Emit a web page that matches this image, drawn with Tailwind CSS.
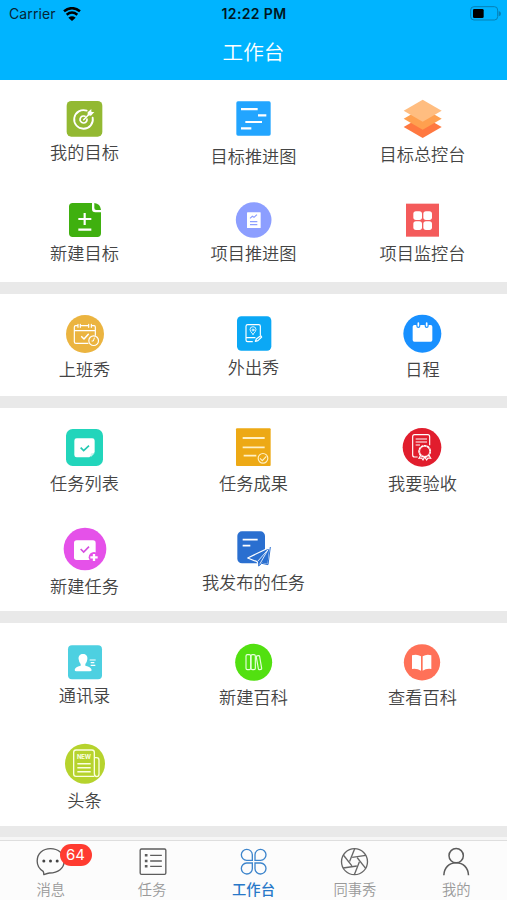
<!DOCTYPE html>
<html lang="zh-CN">
<head>
<meta charset="utf-8">
<title>工作台</title>
<script src="https://cdn.jsdelivr.net/npm/@tailwindcss/browser@4"></script>
</head>
<body class="w-[507px] h-[900px] overflow-hidden bg-[#e9e9e9] font-['Noto_Sans_CJK_SC',sans-serif] text-[#444]">
<div class="flex h-[900px] flex-col">
  <header class="h-[79.5px] shrink-0 bg-[#00b4ff]">
    <div class="grid h-[27px] grid-cols-[1fr_100px_1fr] items-center pl-[9px] pr-[6px] font-['Inter',sans-serif] text-[14px] text-[#062536]">
      <div class="flex items-center gap-[7px]"><span class="tracking-[0.12px]">Carrier</span>
        <svg class="h-[14px] w-[18px]" viewBox="186 18 54 42" fill="none" stroke="#000" stroke-width="7.5"><path d="M189 31Q213 12 237 31M197 41Q213 28 229 41"/><path d="M202 50Q213 42 224 50L213 60Z" fill="#000" stroke="none"/></svg>
      </div>
      <div class="-ml-[2px] text-center text-[14px] font-semibold tracking-[0.35px] text-[#001722]">12:22 PM</div>
      <svg class="h-[15px] w-[31px] justify-self-end" viewBox="1410 17 93 45"><rect x="1412" y="19" width="81" height="40" rx="10" fill="none" stroke="#0681b5" stroke-width="3"/><rect x="1419" y="26" width="32" height="27" rx="4"/><path d="M1496 32q7 2 7 8t-7 8z" fill="#0681b5"/></svg>
    </div>
    <h1 class="mt-[9px] text-center text-[20.6px] leading-[30px] font-[350] text-white">工作台</h1>
  </header>

  <main class="flex shrink-0 flex-col gap-3 text-[17.2px] leading-[18.5px] font-[350]">
    <section class="grid grid-cols-3 auto-rows-[101.25px] bg-white">
      <div class="flex flex-col items-center pt-4">
        <svg class="size-[45px] shrink-0" viewBox="66 18 135 135" fill="none" stroke="#fff" stroke-linecap="round"><rect x="80" y="33" width="107" height="107" rx="14" fill="#93b932" stroke="none"/><path d="M140 62A28 28 0 1 0 158 83" stroke-width="5.5"/><path d="M135 79A10.500 10.500 0 1 0 141 87" stroke-width="5"/><path d="M131 89L153 67" stroke-width="4.500"/><path d="M143 76V67L154 57V66H163L153 77Z" fill="#fff" stroke="none"/></svg>
        <span class="mt-[2px]">我的目标</span>
      </div>
      <div class="flex flex-col items-center pt-4">
        <svg class="size-[45px] shrink-0" viewBox="573 18 135 135"><rect x="589" y="34" width="103" height="103" rx="5" fill="#22a5ff"/><path d="M603 57.500H653M654 76H679M616 96H666M603 115H634" stroke="#fff" stroke-width="6.500"/></svg>
        <span class="mt-[6px]">目标推进图</span>
      </div>
      <div class="flex flex-col items-center pt-4">
        <svg class="size-[45px] shrink-0" viewBox="600 18 135 135"><path d="M611 111L668 78L725 111L668 144Z" fill="#ff7840"/><path d="M611 86L668 53L725 86L668 119Z" fill="#ffa04f"/><path d="M611 62L668 29L725 62L668 95Z" fill="#ffbd80"/></svg>
        <span class="mt-[4px]">目标总控台</span>
      </div>
      <div class="flex flex-col items-center pt-4">
        <svg class="size-[45px] shrink-0" viewBox="66 21 135 135"><path d="M98 39H156V57Q156 67 166 67H183V130Q183 141 172 141H98Q87 141 87 130V50Q87 39 98 39Z" fill="#3fb00f"/><path d="M163 39Q181 41 183 60H169Q163 60 163 54Z" fill="#3fb00f"/><path d="M134 69V105M115 87H154M115 119H154" stroke="#fff" stroke-width="6.500"/></svg>
        <span class="mt-[2px]">新建目标</span>
      </div>
      <div class="flex flex-col items-center pt-4">
        <svg class="size-[45px] shrink-0" viewBox="573 21 135 135" fill="none"><circle cx="641" cy="90" r="53.500" fill="#8c9eff"/><rect x="621" y="67" width="41" height="47" rx="1" fill="#fff"/><path d="M630 85L637 79L642 82L651 74M630 95H652M630 104H652" stroke="#8c9eff" stroke-width="3.500"/></svg>
        <span class="mt-[2.5px]">项目推进图</span>
      </div>
      <div class="flex flex-col items-center pt-4">
        <svg class="size-[45px] shrink-0" viewBox="600 21 135 135"><rect x="618" y="41" width="99" height="99" fill="#f45b5b"/><g fill="#fff"><rect x="640" y="64" width="26" height="26" rx="8"/><rect x="670" y="64" width="26" height="26" rx="8"/><rect x="640" y="94" width="26" height="26" rx="8"/><rect x="670" y="94" width="26" height="26" rx="8"/></g></svg>
        <span class="mt-[2px]">项目监控台</span>
      </div>
    </section>

    <section class="grid grid-cols-3 auto-rows-[102px] bg-white">
      <div class="flex flex-col items-center pt-4">
        <svg class="size-[45px] shrink-0" viewBox="66 15 135 135" fill="none" stroke="#fff" stroke-width="3.500" stroke-linecap="round" stroke-linejoin="round"><circle cx="135" cy="87" r="57" fill="#ebb440" stroke="none"/><path d="M114 62H107Q103 62 103 66V110Q103 115 108 115H144M166 91V66Q166 62 162 62H157M121 62H146M103 77H166M114 58V67M121 58V67M146 58V67M154 58V67"/><path d="M125 95L132 102L145 88" stroke-width="4.500"/><circle cx="161" cy="107" r="14.500"/><path d="M163 99L160 108H156" stroke-width="3"/></svg>
        <span class="mt-[4.5px]">上班秀</span>
      </div>
      <div class="flex flex-col items-center pt-4">
        <svg class="size-[45px] shrink-0" viewBox="573 15 135 135" fill="none" stroke="#fff" stroke-width="3.500" stroke-linecap="round" stroke-linejoin="round"><rect x="591" y="34" width="103" height="103" rx="13" fill="#0ba8f5" stroke="none"/><path d="M661 89V64Q661 59 656 59H623Q618 59 618 64V105Q618 110 623 110H637M618 98H645"/><path d="M639 88Q630 79 630 74A9 9 0 0 1 648 74Q648 79 639 88Z" stroke-width="2.500"/><circle cx="639" cy="75" r="3" stroke-width="2.500"/><path d="M646 109L649 102L662 92L665 96L654 107Z"/></svg>
        <span class="mt-[3px]">外出秀</span>
      </div>
      <div class="flex flex-col items-center pt-4">
        <svg class="size-[45px] shrink-0" viewBox="120 15 135 135"><circle cx="187" cy="86" r="57" fill="#1890ff"/><rect x="158" y="60" width="59" height="50" rx="5" fill="#fff"/><path d="M175 55V63M200 55V63" stroke="#1890ff" stroke-width="12" stroke-linecap="round"/><path d="M175 54V63M200 54V63" stroke="#fff" stroke-width="5" stroke-linecap="round"/></svg>
        <span class="mt-[4.500px]">日程</span>
      </div>
    </section>

    <section class="grid grid-cols-3 auto-rows-[101.500px] bg-white">
      <div class="flex flex-col items-center pt-4">
        <svg class="size-[45px] shrink-0" viewBox="66 12 135 135"><rect x="78" y="27" width="111" height="111" rx="20" fill="#22d5bb"/><path d="M110 55H157Q164 55 164 62V97L148 112H110Q103 112 103 105V62Q103 55 110 55Z" fill="#fff"/><path d="M152 112V104Q152 100 156 100H164" fill="#c4f5ed"/><path d="M122 83L131 92L147 77" fill="none" stroke="#22c9b1" stroke-width="5"/></svg>
        <span class="mt-[4.500px]">任务列表</span>
      </div>
      <div class="flex flex-col items-center pt-4">
        <svg class="size-[45px] shrink-0" viewBox="573 12 135 135" fill="none" stroke="#fff0c4"><rect x="588" y="25" width="104" height="113" rx="3" fill="#eda915" stroke="none"/><path d="M608 54H674M608 82H674M611 107H649" stroke-width="5.500"/><circle cx="669" cy="115" r="14.500" stroke-width="3.500"/><path d="M660 115L667 122L679 109" stroke-width="3.500"/></svg>
        <span class="mt-[4.500px]">任务成果</span>
      </div>
      <div class="flex flex-col items-center pt-4">
        <svg class="size-[45px] shrink-0" viewBox="120 357 135 135" fill="none" stroke="#fff" stroke-width="3.500"><circle cx="186" cy="427" r="58" fill="#e11d2d" stroke="none"/><path d="M173 456H164Q158 456 158 450V395Q158 389 164 389H203Q209 389 209 395V421M167 402H201M167 411H201M167 420H180"/><circle cx="194" cy="439" r="17" stroke-width="4.500" stroke-dasharray="8 1.500"/><circle cx="194" cy="439" r="15" stroke-width="2"/><path d="M182 451L177 460L185 459L189 465L194 456L200 465L204 459L212 460L207 451"/></svg>
        <span class="mt-[4.5px]">我要验收</span>
      </div>
      <div class="flex flex-col items-center pt-4">
        <svg class="size-[45px] shrink-0" viewBox="66 17 135 135"><circle cx="135" cy="86" r="64" fill="#e551e9"/><rect x="102" y="60" width="65" height="59" rx="8" fill="#fff"/><path d="M122 86L131 95L147 79" fill="none" stroke="#d64fe0" stroke-width="5"/><circle cx="162" cy="111" r="16" fill="#e551e9"/><path d="M162 101V122M151 111H173" stroke="#fff" stroke-width="7"/></svg>
        <span class="mt-[6.500px]">新建任务</span>
      </div>
      <div class="flex flex-col items-center pt-4">
        <svg class="size-[45px] shrink-0" viewBox="573 17 135 135"><rect x="592" y="33" width="83" height="96" rx="14" fill="#2a6fd0"/><path d="M608 58H653M608 76H631" stroke="#fff" stroke-width="5.500"/><path d="M623 113L690 81L684 133L666 129L658 137L651 124Z" fill="#2a6fd0" stroke="#fff" stroke-width="3.500" stroke-linejoin="round"/><path d="M653 123L684 88L659 132" fill="none" stroke="#fff" stroke-width="2.500"/><path d="M656 126V137L665 129L684 133L691 80" fill="none" stroke="#2a6fd0" stroke-width="3"/></svg>
        <span class="mt-[2.500px]">我发布的任务</span>
      </div>
    </section>

    <section class="grid grid-cols-3 auto-rows-[101.250px] bg-white">
      <div class="flex flex-col items-center pt-4">
        <svg class="size-[45px] shrink-0" viewBox="66 12 135 135"><rect x="84" y="31" width="102" height="102" rx="12" fill="#4dd0e1"/><path d="M129 57C118 57 115 65 116 73Q117 82 122 87V92Q104 96 104 105Q104 109 109 109H149Q155 109 155 105Q154 96 136 92V87Q141 82 142 73C143 65 140 57 129 57Z" fill="#fff"/><path d="M149 75H167M152 83H163M152 91H166" stroke="#fff" stroke-width="3.500"/></svg>
        <span class="mt-[2px]">通讯录</span>
      </div>
      <div class="flex flex-col items-center pt-4">
        <svg class="size-[45px] shrink-0" viewBox="573 12 135 135" fill="none" stroke="#e6ffdc" stroke-width="3.500"><circle cx="641" cy="82" r="55.500" fill="#52e010" stroke="none"/><rect x="618" y="59" width="14" height="45" rx="4"/><rect x="633" y="59" width="13" height="45" rx="4"/><rect x="652" y="62" width="10" height="42" rx="3" transform="rotate(-10 657 83)"/></svg>
        <span class="mt-[3.500px]">新建百科</span>
      </div>
      <div class="flex flex-col items-center pt-4">
        <svg class="size-[45px] shrink-0" viewBox="1080 12 135 135"><circle cx="1146" cy="82" r="54.500" fill="#ff7158"/><path d="M1143 64Q1131 56 1116 61V102Q1132 100 1143 107ZM1148 64Q1160 56 1174 61V102Q1158 100 1148 107Z" fill="#fff"/></svg>
        <span class="mt-[3.500px]">查看百科</span>
      </div>
      <div class="flex flex-col items-center pt-4">
        <svg class="size-[45px] shrink-0" viewBox="66 315 135 135" fill="none" stroke="#fbffe0" stroke-width="4"><circle cx="135" cy="386" r="60" fill="#b6d32d" stroke="none"/><path d="M163 424H108Q101 424 101 417V352Q101 345 108 345H156Q163 345 163 352V415Q163 425 170 425Q177 425 177 417V376Q177 368 170 368H163"/><path d="M112 386H152M112 398H152M112 410H152" stroke-width="4.500"/><text x="132" y="373" text-anchor="middle" font-family="Inter,sans-serif" font-size="18" font-weight="700" textLength="42" fill="#fbffe0" stroke="none">NEW</text></svg>
        <span class="mt-[5.500px]">头条</span>
      </div>
    </section>
  </main>

  <nav class="mt-auto grid h-[63px] shrink-0 grid-cols-5 bg-[#f6f6f6] pt-[3px] text-[14.3px] leading-5 text-[#999]">
    <div class="relative flex flex-col items-center border-t border-[#dedede] bg-[#fcfcfc] pt-[5px]">
      <svg class="size-[33px] shrink-0" viewBox="102.500 78 99 99" fill="none" stroke="#5c5c5c" stroke-width="4"><path d="M130 154Q112 143 112 123C112 101 129 86 152 86S193 101 193 123S175 159 149 159Q144 159 132 164Q132 159 130 154Z" stroke-linejoin="round"/><g fill="#444" stroke="none"><circle cx="132" cy="123" r="4.500"/><circle cx="152" cy="123" r="4.500"/><circle cx="172" cy="123" r="4.500"/></g></svg>
      <span class="font-[350]">消息</span>
      <b class="absolute left-[59.500px] top-[3px] h-[22px] w-8 rounded-full bg-[#ff3b30] text-center font-['Inter',sans-serif] text-[15px] leading-[22px] font-normal text-white">64</b>
    </div>
    <div class="flex flex-col items-center border-t border-[#dedede] bg-[#fcfcfc] pt-[5px]">
      <svg class="size-[33px] shrink-0" viewBox="406.500 78 99 99" fill="none" stroke="#5c5c5c" stroke-width="4"><rect x="419" y="87" width="77" height="76" rx="4"/><path d="M449 106H484M449 123H484M449 139H484"/><path d="M433 106H441M433 123H441M433 139H441" stroke-width="7.500"/></svg>
      <span class="font-[350]">任务</span>
    </div>
    <div class="flex flex-col items-center border-t border-[#dedede] bg-[#fcfcfc] pt-[5px] text-[#2878c8]">
      <svg class="size-[33px] shrink-0" viewBox="711 78 99 99" fill="none" stroke="#3d85cc" stroke-width="4"><path d="M757 121H740A16.500 16.500 0 1 1 757 104ZM765 121V104A16.500 16.500 0 1 1 782 121ZM757 129V146A16.500 16.500 0 1 1 740 129ZM765 129H782A16.500 16.500 0 1 1 765 146Z"/></svg>
      <span class="font-medium">工作台</span>
    </div>
    <div class="flex flex-col items-center border-t border-[#dedede] bg-[#fcfcfc] pt-[5px]">
      <svg class="size-[33px] shrink-0" viewBox="1015.500 78 99 99" fill="none" stroke="#666" stroke-width="4"><circle cx="1065" cy="125" r="39"/><path id="blade" d="M1058 112L1099 106"/><use href="#blade" transform="rotate(60 1065 125)"/><use href="#blade" transform="rotate(120 1065 125)"/><use href="#blade" transform="rotate(180 1065 125)"/><use href="#blade" transform="rotate(240 1065 125)"/><use href="#blade" transform="rotate(300 1065 125)"/></svg>
      <span class="font-[350]">同事秀</span>
    </div>
    <div class="flex flex-col items-center border-t border-[#dedede] bg-[#fcfcfc] pt-[5px]">
      <svg class="size-[33px] shrink-0" viewBox="1319.500 78 99 99" fill="none" stroke="#5c5c5c" stroke-width="4.500"><circle cx="1368" cy="107" r="21.500"/><path d="M1331 166C1332 143 1347 128 1368 128S1404 143 1405 166"/></svg>
      <span class="font-[350]">我的</span>
    </div>
  </nav>
</div>
</body>
</html>
